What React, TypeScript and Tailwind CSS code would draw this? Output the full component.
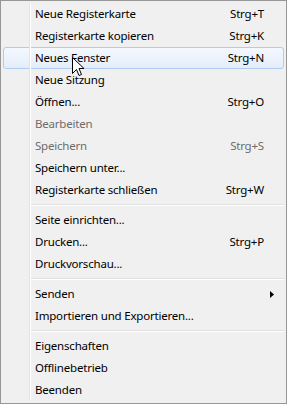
import React from 'react';

type Item =
  | { sep: true }
  | { label: string; shortcut?: string; disabled?: boolean; active?: boolean; submenu?: boolean; sep?: false };

const items: Item[] = [
  { label: 'Neue Registerkarte', shortcut: 'Strg+T' },
  { label: 'Registerkarte kopieren', shortcut: 'Strg+K' },
  { label: 'Neues Fenster', shortcut: 'Strg+N', active: true },
  { label: 'Neue Sitzung' },
  { label: 'Öffnen...', shortcut: 'Strg+O' },
  { label: 'Bearbeiten', disabled: true },
  { label: 'Speichern', shortcut: 'Strg+S', disabled: true },
  { label: 'Speichern unter...' },
  { label: 'Registerkarte schließen', shortcut: 'Strg+W' },
  { sep: true },
  { label: 'Seite einrichten...' },
  { label: 'Drucken...', shortcut: 'Strg+P' },
  { label: 'Druckvorschau...' },
  { sep: true },
  { label: 'Senden', submenu: true },
  { label: 'Importieren und Exportieren...' },
  { sep: true },
  { label: 'Eigenschaften' },
  { label: 'Offlinebetrieb' },
  { label: 'Beenden' },
];

// mouse pointer hovering over "Fenster"
const Cursor: React.FC = () => (
  <svg className="absolute left-[71px] top-[56px]" width="13" height="20" viewBox="0 0 13 20">
    <path d="M0.5 0.5 L0.5 16.5 L4.5 12.5 L7 18.5 L9.5 17.5 L7 11.5 L12 11.5 Z" fill="#fff" stroke="#000" strokeWidth="1" />
  </svg>
);

const MenuRow: React.FC<{ item: Exclude<Item, { sep: true }> }> = ({ item }) => (
  <div
    className={`mx-[2px] flex h-[22px] items-center rounded-[3px] border pl-[31px] ${
      item.active ? 'border-[#aecdf0] bg-gradient-to-b from-[#f4f8fe] to-[#e4edfa]' : 'border-transparent'
    } ${item.disabled ? 'text-[#6d6d6d]' : 'text-black'}`}
  >
    <span className="flex-1">{item.label}</span>
    {item.shortcut && <span className="pr-[19px]">{item.shortcut}</span>}
    {item.submenu && (
      <svg className="mr-[9px]" width="4" height="7" viewBox="0 0 4 7">
        <path d="M0 0 L4 3.5 L0 7 Z" fill="#000" />
      </svg>
    )}
  </div>
);

const App: React.FC = () => {
  return (
    <div
      className="relative flex h-[404px] w-[287px] flex-col border border-[#979797] bg-[#f0f0f0] py-[2px] text-[11.5px] leading-none tracking-[-0.2px]"
      style={{ fontFamily: '"Noto Sans", "Open Sans", sans-serif' }}
    >
      {/* gutter line */}
      <div className="absolute bottom-[2px] left-[28px] top-[2px] w-[2px] border-l border-[#e2e3e3] bg-white" />
      {items.map((item, i) =>
        item.sep ? (
          <div key={i} className="flex h-[8px] flex-col justify-center pl-[29px] pr-[2px]">
            <div className="h-px bg-[#e0e0e0]" />
            <div className="h-px bg-white" />
          </div>
        ) : (
          <MenuRow key={i} item={item} />
        )
      )}
      <Cursor />
    </div>
  );
};

export default App;
